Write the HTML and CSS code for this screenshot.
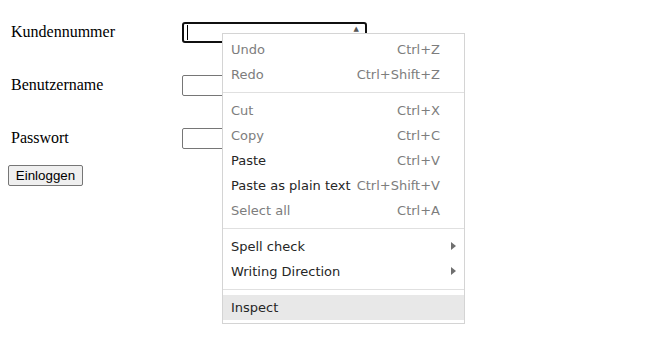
FILE: index.html
```html
<!DOCTYPE html>
<html lang="de">
<head>
    <meta charset="UTF-8">
    <title>Login</title>
    <link rel="stylesheet" href="styles.css">
</head>
<body>
    <!-- login form -->
    <form class="login">
        <div class="row">
            <label class="label">Kundennummer</label>
            <div class="field focused">
                <span class="caret"></span>
                <span class="picker">&#9650;</span>
            </div>
        </div>
        <div class="row">
            <label class="label">Benutzername</label>
            <div class="field"></div>
        </div>
        <div class="row">
            <label class="label">Passwort</label>
            <div class="field"></div>
        </div>
        <button type="button" class="submit">Einloggen</button>
    </form>

    <!-- context menu opened on the first field -->
    <div class="menu">
        <div class="item disabled"><span>Undo</span><span class="key">Ctrl+Z</span></div>
        <div class="item disabled"><span>Redo</span><span class="key">Ctrl+Shift+Z</span></div>
        <div class="sep"></div>
        <div class="item disabled"><span>Cut</span><span class="key">Ctrl+X</span></div>
        <div class="item disabled"><span>Copy</span><span class="key">Ctrl+C</span></div>
        <div class="item"><span>Paste</span><span class="key">Ctrl+V</span></div>
        <div class="item"><span>Paste as plain text</span><span class="key">Ctrl+Shift+V</span></div>
        <div class="item disabled"><span>Select all</span><span class="key">Ctrl+A</span></div>
        <div class="sep"></div>
        <div class="item sub"><span>Spell check</span></div>
        <div class="item sub"><span>Writing Direction</span></div>
        <div class="sep"></div>
        <div class="item hover"><span>Inspect</span></div>
    </div>
</body>
</html>
```
FILE: styles.css
```css
body {
    margin: 8px;
    background: #fff;
    font-family: "Liberation Serif", serif;
    font-size: 16px;
    color: #000;
}

.login {
    display: flex;
    flex-direction: column;
    align-items: flex-start;
}

.row {
    display: flex;
    align-items: center;
    height: 48px;
}

.row + .row {
    margin-top: 5px;
}

.label {
    width: 171px;
    padding-left: 3px;
}

.field {
    position: relative;
    width: 185px;
    height: 21px;
    box-sizing: border-box;
    border: 1px solid #767676;
    border-radius: 2px;
}

.field.focused {
    border: 2px solid #101010;
    border-radius: 3px;
}

.caret {
    position: absolute;
    left: 3px;
    top: 1px;
    width: 1px;
    height: 15px;
    background: #000;
}

.picker {
    position: absolute;
    right: 6px;
    top: 1px;
    font-family: "DejaVu Sans", sans-serif;
    font-size: 7px;
    color: #555;
}

.submit {
    margin-top: 3px;
    width: 75px;
    height: 21px;
    padding: 0;
    font-family: "Liberation Sans", sans-serif;
    font-size: 13.33px;
    color: #000;
    background: #efefef;
    border: 1px solid #767676;
    border-radius: 2px;
}

/* context menu */

.menu {
    position: absolute;
    left: 222px;
    top: 33px;
    width: 241px;
    padding: 3px 0 3px;
    background: #fff;
    border: 1px solid #d4d4d4;
    font-family: "DejaVu Sans", sans-serif;
    font-size: 13px;
}

.item {
    position: relative;
    display: flex;
    justify-content: space-between;
    align-items: center;
    height: 25px;
    padding: 0 24px 0 8px;
    color: #262626;
}

.item.disabled {
    color: #7d7d7d;
}

.item.hover {
    background: #e8e8e8;
}

.key {
    padding-left: 6px;
    color: #7d7d7d;
}

.item.sub::after {
    content: "";
    position: absolute;
    right: 8px;
    top: 8px;
    border-left: 5px solid #6f6f6f;
    border-top: 4px solid transparent;
    border-bottom: 4px solid transparent;
}

.sep {
    height: 1px;
    margin: 5px 0;
    background: #e0e0e0;
}
```
